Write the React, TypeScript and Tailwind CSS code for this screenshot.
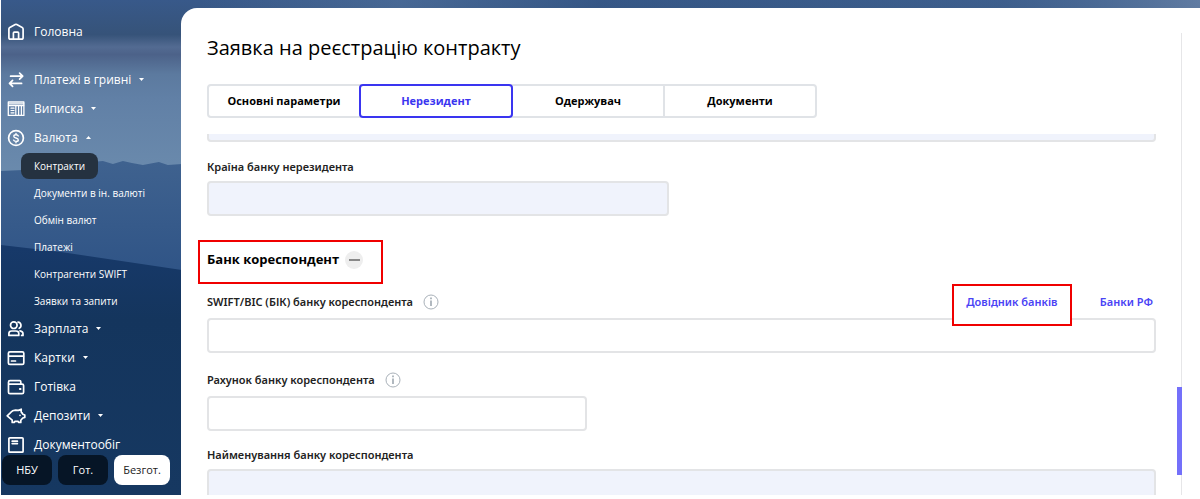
import { useState } from 'react';
import type { ReactNode } from 'react';
import clsx from 'clsx';

interface MenuItem {
  label: string;
  icon: ReactNode;
  arrow?: 'up' | 'down';
  children?: string[];
}

function Icon({ children }: { children: ReactNode }) {
  return (
    <svg
      className="h-5 w-5 shrink-0"
      viewBox="0 0 20 20"
      fill="none"
      stroke="currentColor"
      strokeWidth="1.7"
      strokeLinecap="round"
      strokeLinejoin="round"
      aria-hidden="true"
    >
      {children}
    </svg>
  );
}

const icons = {
  home: (
    <Icon>
      <path d="M2.9 6.9 Q2.9 5.9 3.8 5.4 L9.2 2.6 Q10 2.2 10.8 2.6 L16.2 5.4 Q17.1 5.9 17.1 6.9 V15.4 Q17.1 17.2 15.4 17.2 H4.6 Q2.9 17.2 2.9 15.4 Z" />
      <path d="M7.4 17 V11.1 Q7.4 10.2 8.3 10.2 H11.7 Q12.6 10.2 12.6 11.1 V17" />
    </Icon>
  ),
  transfer: (
    <Icon>
      <path d="M4.6 6.2 H16.4 M13.6 3.2 L16.7 6.2 L13.6 9.2" />
      <path d="M15.6 13.4 H3.8 M6.6 10.4 L3.5 13.4 L6.6 16.4" />
    </Icon>
  ),
  table: (
    <Icon>
      <rect x="2.3" y="3" width="15.6" height="13.4" strokeWidth="1.3" />
      <path d="M2.5 4.8 H17.7 M2.5 6.6 H17.7" strokeWidth="1.3" />
      <path d="M9.8 7 V16.2 M12.6 7 V16.2 M15.4 7 V16.2" strokeWidth="1.2" />
      <path d="M5 9.2 H8 M5 11.5 H8 M5 13.8 H8" strokeWidth="1.2" />
    </Icon>
  ),
  dollar: (
    <Icon>
      <circle cx="10" cy="10" r="7.4" />
      <path d="M12.3 7.9 Q11.8 6.7 10 6.7 Q7.8 6.7 7.8 8.2 Q7.8 9.6 10 10 Q12.3 10.4 12.3 11.9 Q12.3 13.4 10 13.4 Q8.1 13.4 7.6 12.1 M10 5.4 V6.7 M10 13.4 V14.7" strokeWidth="1.4" />
    </Icon>
  ),
  users: (
    <Icon>
      <circle cx="7.8" cy="6.2" r="3.3" />
      <path d="M2.9 16.4 V14.6 Q2.9 12 5.6 12 H10 Q12.8 12 12.8 14.6 V16.4 Z" />
      <path d="M12 3.1 A3.3 3.3 0 0 1 13.2 9.3 M14 11.9 Q17 12.2 17 14.8 V16.4 H15.6" />
    </Icon>
  ),
  card: (
    <Icon>
      <rect x="2.4" y="3.8" width="15.4" height="12.6" rx="1.5" />
      <path d="M2.8 8.2 H17.4 M5.5 13 H9.5" />
    </Icon>
  ),
  wallet: (
    <Icon>
      <path d="M14.8 7 V4.8 Q14.8 3.6 13.6 3.6 H4 Q2.5 3.6 2.5 5.2 V15.2 Q2.5 16.6 4 16.6 H16 Q17.6 16.6 17.6 15.2 V8.6 Q17.6 7.2 16 7.2 H2.8" />
      <path d="M13.8 12 H14.6" strokeWidth="1.8" />
    </Icon>
  ),
  piggy: (
    <Icon>
      <path d="M1.2 9.8 L4.6 6.6 Q6.4 4.2 9.4 4.2 L12.4 4.4 L15.2 3.2 V6 Q16.4 7 16.8 8.2 L18.8 9 V11.4 L16.8 12 L14.8 14.2 V16.4 H12.8 L12 15.4 H9 L8.2 16.4 H6.2 V14.2 Z" />
      <path d="M14 9.2 V9.4" strokeWidth="1.6" />
    </Icon>
  ),
  document: (
    <Icon>
      <rect x="2.9" y="2.8" width="14.2" height="14.4" rx="1" />
      <path d="M6.2 6.2 H11.4 M6.2 8.6 H11.4" />
    </Icon>
  ),
};

const menu: MenuItem[] = [
  { label: 'Платежі в гривні', icon: icons.transfer, arrow: 'down' },
  { label: 'Виписка', icon: icons.table, arrow: 'down' },
  {
    label: 'Валюта',
    icon: icons.dollar,
    arrow: 'up',
    children: ['Контракти', 'Документи в ін. валюті', 'Обмін валют', 'Платежі', 'Контрагенти SWIFT', 'Заявки та запити'],
  },
  { label: 'Зарплата', icon: icons.users, arrow: 'down' },
  { label: 'Картки', icon: icons.card, arrow: 'down' },
  { label: 'Готівка', icon: icons.wallet },
  { label: 'Депозити', icon: icons.piggy, arrow: 'down' },
  { label: 'Документообіг', icon: icons.document },
];

const tabs = ['Основні параметри', 'Нерезидент', 'Одержувач', 'Документи'];
const rates = ['НБУ', 'Гот.', 'Безгот.'];

function Backdrop() {
  return (
    <svg className="absolute inset-0 h-full w-full" viewBox="0 0 1200 495" preserveAspectRatio="none" aria-hidden="true">
      <defs>
        <linearGradient id="sky" x1="0" y1="0" x2="0" y2="1">
          <stop offset="0" stopColor="#38598a" />
          <stop offset="0.07" stopColor="#365379" />
          <stop offset="0.095" stopColor="#536b92" />
          <stop offset="0.11" stopColor="#4c6289" />
          <stop offset="0.15" stopColor="#5c7a9f" />
          <stop offset="0.2" stopColor="#6180a6" />
          <stop offset="0.36" stopColor="#6b8bad" />
        </linearGradient>
        <linearGradient id="hills" x1="0" y1="0" x2="0" y2="1">
          <stop offset="0" stopColor="#3f628f" />
          <stop offset="1" stopColor="#2d5285" />
        </linearGradient>
        <linearGradient id="slope" x1="0" y1="0" x2="0" y2="1">
          <stop offset="0" stopColor="#17396a" />
          <stop offset="0.3" stopColor="#14355d" />
          <stop offset="1" stopColor="#163861" />
        </linearGradient>
        <linearGradient id="cloud" x1="0" y1="0" x2="1" y2="0">
          <stop offset="0" stopColor="#6b8bb0" stopOpacity="0" />
          <stop offset="0.2" stopColor="#6b8bb0" stopOpacity="0.3" />
          <stop offset="0.4" stopColor="#2f527f" stopOpacity="0.3" />
          <stop offset="0.8" stopColor="#4a6c96" stopOpacity="0.3" />
          <stop offset="1" stopColor="#7b93b3" stopOpacity="0.6" />
        </linearGradient>
      </defs>
      <rect width="1200" height="495" fill="url(#sky)" />
      <rect x="200" width="1000" height="12" fill="url(#cloud)" />
      <path d="M0 171 L22 170 L50 165 L90 162 L102 161 L112 164 L122 161 L131 163 L142 165 L158 162 L167 165 L181 164 V290 H0 Z" fill="url(#hills)" />
      <path d="M0 245 L60 252 L181 270 V495 H0 Z" fill="url(#slope)" />
    </svg>
  );
}

function Sidebar() {
  const [rate, setRate] = useState('Безгот.');

  return (
    <aside className="flex w-[180px] shrink-0 flex-col text-white">
      <nav className="min-h-0 flex-1 overflow-hidden pt-[17px]">
        <a href="#home" className="mb-[19px] flex h-[29px] items-center gap-2 pl-[5px] text-xs font-medium">
          {icons.home}
          <span>Головна</span>
        </a>
        {menu.map((item) => (
          <div key={item.label}>
            <a href="#menu" className="flex h-[29px] items-center gap-2 pl-[5px] text-xs font-medium">
              {item.icon}
              <span>{item.label}</span>
              {item.arrow && (
                <svg className={clsx('h-[3px] w-[5px]', item.arrow === 'up' && 'rotate-180')} viewBox="0 0 5 3" aria-hidden="true">
                  <path d="M0 0 H5 L2.5 3 Z" fill="currentColor" />
                </svg>
              )}
            </a>
            {item.children && (
              <ul className="mt-px flex flex-col items-start gap-px pl-5">
                {item.children.map((child, i) => (
                  <li key={child}>
                    <a
                      href="#submenu"
                      className={clsx('flex h-[26px] items-center rounded-lg px-[13px] text-[10px] font-medium', i === 0 && 'bg-[#253240]')}
                    >
                      {child}
                    </a>
                  </li>
                ))}
              </ul>
            )}
          </div>
        ))}
      </nav>

      <div className="flex gap-[6px] pb-[10px] pl-px text-[11px]">
        {rates.map((r) => (
          <button
            key={r}
            type="button"
            onClick={() => setRate(r)}
            className={clsx(
              'h-[30px] rounded-lg font-medium',
              r === 'Безгот.' ? 'w-14' : 'w-[50px]',
              r === rate ? 'bg-white text-[#222]' : 'bg-[#061526] text-white',
            )}
          >
            {r}
          </button>
        ))}
      </div>
    </aside>
  );
}

function InfoButton() {
  return (
    <button type="button" aria-label="Інформація" className="text-[#a9b1b9]">
      <svg className="h-4 w-4" viewBox="0 0 16 16" fill="none" stroke="currentColor" aria-hidden="true">
        <circle cx="8" cy="8" r="7" />
        <path d="M8 6.5 V12" strokeWidth="1.8" />
        <path d="M8 3.6 V5.2" strokeWidth="1.8" />
      </svg>
    </button>
  );
}

interface FieldProps {
  id: string;
  label: string;
  info?: boolean;
  readOnly?: boolean;
  actions?: ReactNode;
}

function Field({ id, label, info, readOnly, actions }: FieldProps) {
  return (
    <div>
      <div className={clsx("flex items-center font-['Noto_Sans','Open_Sans',sans-serif] text-[11px] font-semibold text-[#222]", info ? 'h-8' : 'h-7')}>
        <label htmlFor={id} className="mr-[10px]">{label}</label>
        {info && <InfoButton />}
        {actions}
      </div>
      <input
        id={id}
        type="text"
        readOnly={readOnly}
        className={clsx('block h-[35px] w-full rounded border-2 border-[#e3e4e6] px-3 text-xs', readOnly ? 'bg-[#f0f3fc]' : 'bg-white')}
      />
    </div>
  );
}

export default function App() {
  const [tab, setTab] = useState('Нерезидент');
  const [open, setOpen] = useState(true);

  return (
    <div className="h-screen bg-white pb-1 pl-px font-['Open_Sans','Noto_Sans',sans-serif]">
      <div className="relative h-full overflow-hidden">
        <Backdrop />
        <div className="relative flex h-full">
          <Sidebar />

          <main className="mt-2 flex min-w-0 flex-1 rounded-tl-2xl bg-white">
            <div className="flex min-w-0 flex-1 flex-col">
              <h1 className="mt-6 pl-[26px] text-xl leading-8 font-medium text-black">Заявка на реєстрацію контракту</h1>

              {/* Tabs */}
              <div role="tablist" className="mt-5 flex pl-7">
                {tabs.map((t) => (
                  <button
                    key={t}
                    type="button"
                    role="tab"
                    aria-selected={t === tab}
                    onClick={() => setTab(t)}
                    className={clsx(
                      'relative -ml-[2px] h-[34px] w-[154px] border-2 text-[11px] font-bold first:rounded-l last:rounded-r',
                      t === tab ? 'z-10 rounded border-[#3a35f0] text-[#3a35f0]' : 'border-[#e0e3e7] text-black',
                    )}
                  >
                    {t}
                  </button>
                ))}
              </div>

              {/* Form */}
              <div className="mt-4 min-h-0 flex-1 overflow-hidden pr-[21px] pl-[26px]">
                <input
                  aria-label="Найменування банку нерезидента"
                  readOnly
                  className="-mt-[27px] block h-[35px] w-full rounded border-2 border-[#e3e4e6] bg-[#f0f3fc]"
                />
                <div className="mt-[11px] grid grid-cols-2 gap-[26px]">
                  <Field id="bank-country" label="Країна банку нерезидента" readOnly />
                </div>

                <div className="mt-6 mb-[2px] -ml-[9px] flex h-11 w-[185px] items-center border-2 border-[#f00000] pb-1 pl-[7px]">
                  <h2 className="text-[13px] font-bold text-black">Банк кореспондент</h2>
                  <button
                    type="button"
                    aria-label="Згорнути"
                    aria-expanded={open}
                    onClick={() => setOpen(!open)}
                    className="ml-[6px] flex h-[18px] w-[18px] items-center justify-center rounded-full bg-[#eeeeee]"
                  >
                    <span className="h-[2px] w-[11px] bg-[#888]" />
                  </button>
                </div>

                {open && (
                  <>
                    <Field
                      id="swift"
                      label="SWIFT/BIC (БІК) банку кореспондента"
                      info
                      actions={
                        <div className="ml-auto flex h-full items-center gap-7 pr-[3px] text-[#4a43f5]">
                          <a
                            href="#banks"
                            className="relative -mt-[2px] -mb-2 flex h-[42px] w-[120px] items-center justify-center self-start border-2 border-[#f00000] bg-white pb-[6px]"
                          >
                            Довідник банків
                          </a>
                          <a href="#banks-rf">Банки РФ</a>
                        </div>
                      }
                    />
                    <div className="mt-[11px] w-2/5">
                      <Field id="account" label="Рахунок банку кореспондента" info />
                    </div>
                    <div className="mt-[10px]">
                      <Field id="bank-name" label="Найменування банку кореспондента" readOnly />
                    </div>
                  </>
                )}
              </div>
            </div>

            {/* Scrollbar */}
            <div className="mt-[25px] mr-[18px] flex w-[5px] flex-col justify-end border-r border-[#e6e6e8]">
              <div className="-mr-px mb-5 h-[88px] bg-[#7470fa]" />
            </div>
          </main>
        </div>
      </div>
    </div>
  );
}
